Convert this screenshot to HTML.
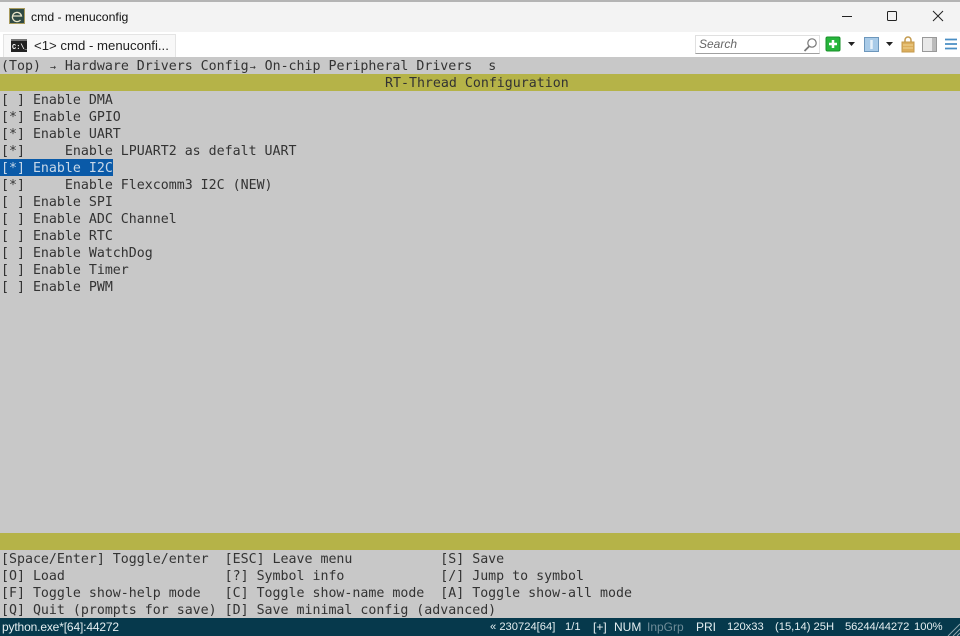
<!DOCTYPE html>
<html><head><meta charset="utf-8">
<style>
html,body{margin:0;padding:0;width:960px;height:636px;overflow:hidden;background:#fff}
body{position:relative;font-family:"Liberation Sans",sans-serif}
.abs{position:absolute}
#title{left:0;top:0;width:960px;height:32px;background:#f3f3f3;border-top:2px solid #b4b4b4;box-sizing:border-box}
#ttext{left:31px;top:9px;font-size:12.25px;line-height:16px;color:#111}
#bar{left:0;top:32px;width:960px;height:25px;background:#fff}
#tab{left:3px;top:34px;width:173px;height:23px;background:#f8f8f8;border:1px solid #e4e4e4;border-bottom:none;box-sizing:border-box}
#tabt{left:34px;top:38px;font-size:13.2px;line-height:16px;color:#222}
#search{left:695px;top:35px;width:125px;height:19px;background:#fff;border:1px solid #e0e0e0;border-bottom:1px solid #a0a0a0;box-sizing:border-box}
#searcht{left:699px;top:37px;font-size:12px;line-height:15px;font-style:italic;color:#666}
#term{left:0;top:57px;width:960px;height:561px;background:#c8c8c8}
.r{position:absolute;left:1px;height:17px;line-height:19px;font-family:"DejaVu Sans Mono",monospace;font-size:13.28px;color:#333;white-space:pre}
.a{display:inline-block;width:8px;font-size:10px;line-height:0;text-align:center}
.o{position:absolute;left:0;width:960px;height:17px;background:#b5b348}
#sel{left:0;top:159px;width:113px;height:17px;background:#0a5aa8}
#st{left:0;top:618px;width:960px;height:18px;background:#06394c}
.s{position:absolute;top:620px;font-size:12px;line-height:15px;color:#e4eef0;white-space:pre}
.d{font-size:11.2px}
</style></head><body>
<div class="abs" id="title"></div>
<svg class="abs" style="left:9px;top:8px" width="16" height="16" viewBox="0 0 16 16"><rect width="16" height="16" fill="#2f4a44"/><rect x="0.5" y="0.5" width="15" height="15" fill="none" stroke="#a89a5c"/><path d="M3.500 8h9A4.600 4.600 0 1 0 11.500 12" stroke="#e8e4c8" stroke-width="1.300" fill="none"/></svg>
<div class="abs" id="ttext">cmd - menuconfig</div>
<svg class="abs" style="left:840px;top:8px" width="110" height="16" viewBox="0 0 110 16"><path d="M2 8.500h10" stroke="#222" stroke-width="1"/><rect x="47.500" y="3.500" width="9" height="9" rx="1" fill="none" stroke="#222"/><path d="M93 3l10 10M103 3l-10 10" stroke="#222" fill="none"/></svg>
<div class="abs" id="bar"></div>
<div class="abs" id="tab"></div>
<svg class="abs" style="left:11px;top:39px" width="16" height="13" viewBox="0 0 16 13"><rect width="16" height="13" fill="#222"/><rect y="0" width="16" height="2" fill="#777"/><text x="1" y="10" font-family="Liberation Mono" font-size="7" font-weight="bold" fill="#fff">C:\_</text></svg>
<div class="abs" id="tabt">&lt;1&gt; cmd - menuconfi...</div>
<div class="abs" id="search"></div>
<div class="abs" id="searcht">Search</div>
<svg class="abs" style="left:803px;top:37px" width="15" height="15" viewBox="0 0 15 15"><circle cx="9" cy="6" r="4.200" fill="none" stroke="#777" stroke-width="1.200"/><path d="M6 9.500L1.500 14" stroke="#777" stroke-width="1.800"/></svg>
<svg class="abs" style="left:825px;top:36px" width="135" height="18" viewBox="0 0 135 18">
<rect x="1" y="1" width="14" height="14" rx="1.500" fill="#27b53c" stroke="#179028"/><path d="M8 4v8M4 8h8" stroke="#fff" stroke-width="2.500"/>
<path d="M23 6h7l-3.500 4z" fill="#222"/>
<rect x="39.500" y="1.500" width="14" height="14" fill="#a9cbe8" stroke="#6d97bc"/><path d="M46.500 4v9" stroke="#e8f2fa" stroke-width="2.500"/>
<path d="M61 6h7l-3.500 4z" fill="#222"/>
<rect x="77" y="6" width="12" height="10" fill="#dcae5c" stroke="#c39a4e"/><path d="M80 6V4a3 3 0 0 1 6 0v2" fill="none" stroke="#c39a4e" stroke-width="1.500"/><path d="M78 9h10M78 12h10" stroke="#f0d596"/>
<rect x="97.500" y="1.500" width="14" height="14" fill="#e8e8e8" stroke="#999"/><rect x="107" y="2" width="4" height="13" fill="#bbb"/>
<path d="M120 3.500h12M120 8h12M120 12.500h12" stroke="#4a8ec4" stroke-width="1.800"/>
</svg>
<div class="abs" id="term"></div>
<div class="o" style="top:74px"></div>
<div class="o" style="top:533px"></div>
<div class="abs" id="sel"></div>
<div class="r" style="top:57px">(Top) <span class="a">→</span> Hardware Drivers Config<span class="a">→</span> On-chip Peripheral Drivers  s</div>
<div class="r" style="top:74px;left:385px">RT-Thread Configuration</div>
<div class="r" style="top:91px">[ ] Enable DMA</div>
<div class="r" style="top:108px">[*] Enable GPIO</div>
<div class="r" style="top:125px">[*] Enable UART</div>
<div class="r" style="top:142px">[*]     Enable LPUART2 as defalt UART</div>
<div class="r" style="top:159px;color:#c8d8e8">[*] Enable I2C</div>
<div class="r" style="top:176px">[*]     Enable Flexcomm3 I2C (NEW)</div>
<div class="r" style="top:193px">[ ] Enable SPI</div>
<div class="r" style="top:210px">[ ] Enable ADC Channel</div>
<div class="r" style="top:227px">[ ] Enable RTC</div>
<div class="r" style="top:244px">[ ] Enable WatchDog</div>
<div class="r" style="top:261px">[ ] Enable Timer</div>
<div class="r" style="top:278px">[ ] Enable PWM</div>
<div class="r" style="top:550px">[Space/Enter] Toggle/enter  [ESC] Leave menu           [S] Save</div>
<div class="r" style="top:567px">[O] Load                    [?] Symbol info            [/] Jump to symbol</div>
<div class="r" style="top:584px">[F] Toggle show-help mode   [C] Toggle show-name mode  [A] Toggle show-all mode</div>
<div class="r" style="top:601px">[Q] Quit (prompts for save) [D] Save minimal config (advanced)</div>
<div class="abs" id="st"></div>
<div class="s" style="left:2px;letter-spacing:-.15px">python.exe*[64]:44272</div>
<div class="s d" style="left:490px">« 230724[64]</div>
<div class="s d" style="left:565px">1/1</div>
<div class="s" style="left:593px">[+]</div>
<div class="s" style="left:614px">NUM</div>
<div class="s" style="left:647px;color:#6f8c98">InpGrp</div>
<div class="s" style="left:696px">PRI</div>
<div class="s d" style="left:727px">120x33</div>
<div class="s d" style="left:775px">(15,14) 25H</div>
<div class="s d" style="left:845px;letter-spacing:-.1px">56244/44272</div>
<div class="s d" style="left:914px">100%</div>
<svg class="abs" style="left:945px;top:621px" width="15" height="15" viewBox="0 0 15 15"><path d="M3 15L15 3M8 15L15 8M12 15l3-3" stroke="#8fa6ae" fill="none"/></svg>
</body></html>
